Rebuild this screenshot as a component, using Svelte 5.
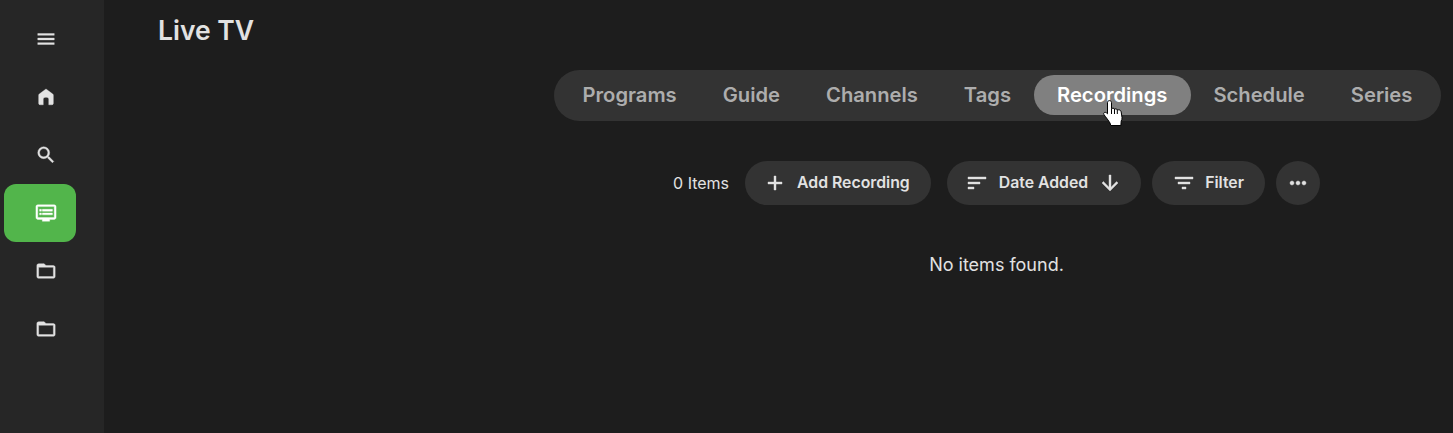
<script>
  const tabs = ["Programs", "Guide", "Channels", "Tags", "Recordings", "Schedule", "Series"];
  const active = "Recordings";
  const folder = "M20 6h-8l-2-2H4c-1.1 0-1.99.9-1.99 2L2 18c0 1.1.9 2 2 2h16c1.1 0 2-.9 2-2V8c0-1.1-.9-2-2-2zm0 12H4V8h16v10z";
  const nav = [
    { path: "M3 18h18v-2H3v2zm0-5h18v-2H3v2zm0-7v2h18V6H3z" },
    { path: "M12 3.2 4.6 8.8C4.2 9.1 4 9.5 4 10v9c0 .8.7 1.5 1.5 1.5H9v-6c0-1.2.9-2.2 3-2.2s3 1 3 2.2v6h3.5c.8 0 1.5-.7 1.5-1.5v-9c0-.5-.2-.9-.6-1.2L12 3.2z" },
    { path: "M15.5 14h-.79l-.28-.27A6.47 6.47 0 0 0 16 9.5 6.5 6.5 0 1 0 9.5 16c1.61 0 3.09-.59 4.23-1.57l.27.28v.79l5 4.99L20.49 19l-4.99-5zm-6 0C7.01 14 5 11.99 5 9.5S7.01 5 9.5 5 14 7.01 14 9.5 11.99 14 9.5 14z" },
    { path: "M21 3H3c-1.1 0-2 .9-2 2v12c0 1.1.9 2 2 2h5v2h8v-2h5c1.1 0 2-.9 2-2V5c0-1.1-.9-2-2-2zm0 14H3V5h18v12zM19 8H8v2h11V8zm0 4H8v2h11v-2zM7 8H5v2h2V8zm0 4H5v2h2v-2z", selected: true },
    { path: folder },
    { path: folder }
  ];
</script>

<div class="page">
  <nav class="sidebar">
    {#each nav as item}
      <div class="nav-item" class:selected={item.selected}>
        <svg width="22" height="22" viewBox="0 0 24 24"><path d={item.path} /></svg>
      </div>
    {/each}
  </nav>

  <main class="main">
    <h1>Live TV</h1>
    <div class="content">
      <div class="tabs">
        {#each tabs as tab}
          <div class="tab" class:active={tab === active}>
            {tab}
            {#if tab === active}
              <svg class="cursor" width="20" height="26" viewBox="0 0 20 26">
                <path d="M6.5 .6C7.7 .6 8.5 1.400 8.5 2.600V8.400L10 8.200C10.800 8.200 11.200 8.500 11.500 9L12.800 8.900C13.600 8.900 14.100 9.300 14.300 9.900L15.500 9.800C17 9.800 18 10.600 18.200 12L19 17.500C19.200 19 18.800 20 18.200 21L17.900 25.500H7.800L7 23C5.500 20.500 3 17.500 1 14.600C.4 13.700 .7 12.800 1.400 12.500C2.400 12.100 3.300 12.500 4.500 13.800V2.600C4.500 1.400 5.300 .6 6.500 .6Z" fill="#fff" stroke="#000" stroke-width="1" />
                <path d="M8.500 8.400V14M11.500 9V14M14.300 9.900V14" stroke="#000" stroke-width="1" fill="none" />
              </svg>
            {/if}
          </div>
        {/each}
      </div>

      <div class="toolbar">
        <span class="count">0 Items</span>
        <button class="btn add">
          <svg width="24" height="24" viewBox="0 0 24 24"><path d="M19 13h-6v6h-2v-6H5v-2h6V5h2v6h6v2z" /></svg>
          <span class="label">Add Recording</span>
        </button>
        <button class="btn sort">
          <svg width="24" height="24" viewBox="0 0 24 24"><path d="M3 18h6v-2H3v2zM3 6v2h18V6H3zm0 7h12v-2H3v2z" /></svg>
          <span class="label">Date Added</span>
          <svg width="24" height="24" viewBox="0 0 24 24"><path d="m20 12-1.410-1.410L13 16.170V4h-2v12.170l-5.580-5.590L4 12l8 8 8-8z" /></svg>
        </button>
        <button class="btn filter">
          <svg width="24" height="24" viewBox="0 0 24 24"><path d="M10 18h4v-2h-4v2zM3 6v2h18V6H3zm3 7h12v-2H6v2z" /></svg>
          <span class="label">Filter</span>
        </button>
        <button class="btn more" aria-label="More">
          <svg width="24" height="24" viewBox="0 0 24 24"><path d="M6 10c-1.100 0-2 .9-2 2s.9 2 2 2 2-.9 2-2-.9-2-2-2zm12 0c-1.100 0-2 .9-2 2s.9 2 2 2 2-.9 2-2-.9-2-2-2zm-6 0c-1.100 0-2 .9-2 2s.9 2 2 2 2-.9 2-2-.9-2-2-2z" /></svg>
        </button>
      </div>

      <p class="empty">No items found.</p>
    </div>
  </main>
</div>

<style>
  :global(body) {
    margin: 0;
    background: #1d1d1d;
  }
  .page {
    display: flex;
    height: 433px;
    overflow: hidden;
    font-family: Inter, "Liberation Sans", sans-serif;
    color: #e2e2e2;
  }
  .sidebar {
    width: 104px;
    flex: none;
    box-sizing: border-box;
    padding: 10px 28px 0 4px;
    background: #262626;
  }
  .nav-item {
    height: 58px;
    display: flex;
    align-items: center;
    padding-left: 31px;
    box-sizing: border-box;
    border-radius: 12px;
  }
  .nav-item svg {
    fill: #e2e2e2;
    stroke: #e2e2e2;
    stroke-width: 0.4;
  }
  .nav-item.selected {
    background: #52b54b;
  }
  .nav-item.selected svg {
    fill: #fff;
    stroke: #fff;
  }
  .main {
    flex: 1;
    min-width: 0;
  }
  h1 {
    margin: 0;
    padding: 14px 0 0 54px;
    font-size: 26.500px;
    line-height: 32px;
    font-weight: 600;
    color: #e2e2e2;
  }
  .content {
    margin: 24px 12px 0 450px;
    display: flex;
    flex-direction: column;
    align-items: center;
  }
  .tabs {
    align-self: stretch;
    display: flex;
    height: 51px;
    box-sizing: border-box;
    padding: 5px 5px 5px 5.500px;
    border-radius: 26px;
    background: #333;
  }
  .tab {
    position: relative;
    padding: 0 23px;
    height: 40px;
    line-height: 40px;
    border-radius: 20px;
    font-size: 20.200px;
    font-weight: 600;
    color: #adadad;
    white-space: nowrap;
  }
  .tab.active {
    background: #808080;
    color: #fff;
    padding: 0 23.500px;
    margin: 0 -0.500px;
  }
  .cursor {
    position: absolute;
    left: 69px;
    top: 25px;
  }
  .toolbar {
    margin-top: 40px;
    display: flex;
    align-items: center;
    margin-left: -2px;
  }
  .count {
    font-size: 16px;
    font-weight: 400;
    margin-right: 16px;
    margin-bottom: 1px;
  }
  .btn {
    display: flex;
    align-items: center;
    height: 44px;
    border: 0;
    padding: 0;
    border-radius: 22px;
    background: #333;
    color: #e2e2e2;
    font: 600 15.800px Inter, "Liberation Sans", sans-serif;
    white-space: nowrap;
  }
  .btn svg {
    fill: #e2e2e2;
    stroke: #e2e2e2;
    stroke-width: 0.4;
    flex: none;
  }
  .label {
    margin-bottom: 2px;
  }
  .add {
    padding: 0 21px 0 18px;
    gap: 10px;
    margin-right: 16px;
  }
  .sort {
    padding: 0 19px 0 18px;
    gap: 10px;
    margin-right: 11px;
  }
  .filter {
    padding: 0 21px 0 20px;
    gap: 9px;
    margin-right: 11px;
  }
  .more {
    width: 44px;
    justify-content: center;
  }
  .empty {
    margin: 49px 0 0 -2px;
    font-size: 18px;
    line-height: 22px;
    font-weight: 400;
    color: #e2e2e2;
  }
</style>
